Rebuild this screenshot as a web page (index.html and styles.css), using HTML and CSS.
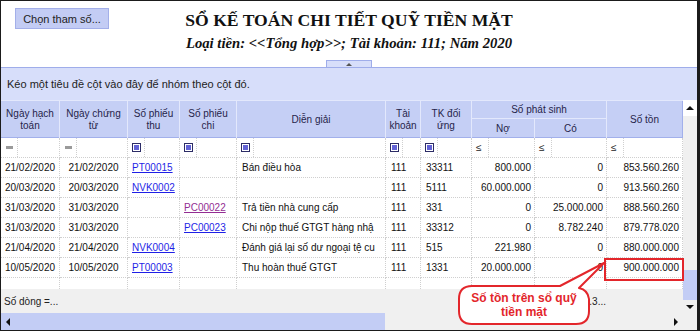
FILE: index.html
```html
<!DOCTYPE html>
<html lang="vi">
<head>
    <meta charset="UTF-8">
    <meta name="viewport" content="width=device-width, initial-scale=1.0">
    <title>Sổ kế toán chi tiết quỹ tiền mặt</title>
    <link rel="stylesheet" href="styles.css">
</head>
<body>
<div class="window">
    <div class="top">
        <div class="head">
            <div class="head-left">
                <button class="param-btn">Chọn tham số...</button>
            </div>
            <div class="titles">
                <h1>SỔ KẾ TOÁN CHI TIẾT QUỸ TIỀN MẶT</h1>
                <p>Loại tiền: &lt;&lt;Tổng hợp&gt;&gt;; Tài khoản: 111; Năm 2020</p>
            </div>
            <div></div>
        </div>
        <div class="collapse-tab"><span class="tri-up tiny"></span></div>
    </div>

    <div class="group-panel">Kéo một tiêu đề cột vào đây để nhóm theo cột đó.</div>

    <div class="grid-area">
        <div class="grid">
            <div class="grid-head">
                <div class="hc r2">Ngày hạch<br>toán</div>
                <div class="hc r2">Ngày chứng<br>từ</div>
                <div class="hc r2">Số phiếu<br>thu</div>
                <div class="hc r2">Số phiếu<br>chi</div>
                <div class="hc r2">Diễn giải</div>
                <div class="hc r2">Tài<br>khoản</div>
                <div class="hc r2">TK đối<br>ứng</div>
                <div class="hc span2">Số phát sinh</div>
                <div class="hc r2">Số tồn</div>
                <div class="hc">Nợ</div>
                <div class="hc">Có</div>
            </div>

            <div class="row filter">
                <div class="cell"><span class="op"><i class="eq"></i></span></div>
                <div class="cell"><span class="op"><i class="eq"></i></span></div>
                <div class="cell"><span class="op"><i class="chk"></i></span></div>
                <div class="cell"><span class="op"><i class="chk"></i></span></div>
                <div class="cell"><span class="op"><i class="chk"></i></span></div>
                <div class="cell"><span class="op"><i class="chk"></i></span></div>
                <div class="cell"><span class="op"><i class="chk"></i></span></div>
                <div class="cell"><span class="op le">≤</span></div>
                <div class="cell"><span class="op le">≤</span></div>
                <div class="cell"><span class="op le">≤</span></div>
            </div>

            <div class="row">
                <div class="cell c">21/02/2020</div>
                <div class="cell c">21/02/2020</div>
                <div class="cell"><a href="#">PT00015</a></div>
                <div class="cell"></div>
                <div class="cell t">Bán điều hòa</div>
                <div class="cell t">111</div>
                <div class="cell t">33311</div>
                <div class="cell n">800.000</div>
                <div class="cell n">0</div>
                <div class="cell n">853.560.260</div>
            </div>
            <div class="row">
                <div class="cell c">20/03/2020</div>
                <div class="cell c">20/03/2020</div>
                <div class="cell"><a href="#">NVK0002</a></div>
                <div class="cell"></div>
                <div class="cell t"></div>
                <div class="cell t">111</div>
                <div class="cell t">5111</div>
                <div class="cell n">60.000.000</div>
                <div class="cell n">0</div>
                <div class="cell n">913.560.260</div>
            </div>
            <div class="row">
                <div class="cell c">31/03/2020</div>
                <div class="cell c">31/03/2020</div>
                <div class="cell"></div>
                <div class="cell"><a href="#" class="visited">PC00022</a></div>
                <div class="cell t">Trả tiền nhà cung cấp</div>
                <div class="cell t">111</div>
                <div class="cell t">331</div>
                <div class="cell n">0</div>
                <div class="cell n">25.000.000</div>
                <div class="cell n">888.560.260</div>
            </div>
            <div class="row">
                <div class="cell c">31/03/2020</div>
                <div class="cell c">31/03/2020</div>
                <div class="cell"></div>
                <div class="cell"><a href="#">PC00023</a></div>
                <div class="cell t">Chi nộp thuế GTGT hàng nhậ</div>
                <div class="cell t">111</div>
                <div class="cell t">33312</div>
                <div class="cell n">0</div>
                <div class="cell n">8.782.240</div>
                <div class="cell n">879.778.020</div>
            </div>
            <div class="row">
                <div class="cell c">21/04/2020</div>
                <div class="cell c">21/04/2020</div>
                <div class="cell"><a href="#">NVK0004</a></div>
                <div class="cell"></div>
                <div class="cell t">Đánh giá lại số dư ngoại tệ cu</div>
                <div class="cell t">111</div>
                <div class="cell t">515</div>
                <div class="cell n">221.980</div>
                <div class="cell n">0</div>
                <div class="cell n">880.000.000</div>
            </div>
            <div class="row">
                <div class="cell c">10/05/2020</div>
                <div class="cell c">10/05/2020</div>
                <div class="cell"><a href="#">PT00003</a></div>
                <div class="cell"></div>
                <div class="cell t">Thu hoàn thuế GTGT</div>
                <div class="cell t">111</div>
                <div class="cell t">1331</div>
                <div class="cell n">20.000.000</div>
                <div class="cell n">0</div>
                <div class="cell n">900.000.000</div>
            </div>
            <div class="row filler">
                <div class="cell"></div><div class="cell"></div><div class="cell"></div><div class="cell"></div><div class="cell"></div>
                <div class="cell"></div><div class="cell"></div><div class="cell"></div><div class="cell"></div><div class="cell"></div>
            </div>

            <div class="summary">
                <div class="sum-count">Số dòng =...</div>
                <div class="sum-co">9.3...</div>
            </div>
        </div>

        <div class="vscroll">
            <div class="sb-btn top-btn"><span class="tri-up"></span></div>
            <div class="sb-track"></div>
            <div class="sb-thumb"></div>
            <div class="sb-btn bottom-btn"><span class="tri-down"></span></div>
        </div>
    </div>

    <div class="hscroll">
        <div class="hs-left"><span class="tri-left"></span></div>
        <div class="hs-thumb"></div>
        <div class="hs-track"></div>
        <div class="hs-right"><span class="tri-right"></span></div>
        <div class="hs-corner"></div>
    </div>

    <!-- chú thích -->
    <div class="mark"></div>
    <div class="callout">
        <svg width="155" height="72" viewBox="0 0 155 72">
            <path d="M17 28 H105 L149 5 L124 30 Q133 32 134 41 V53 Q134 66 121 66 H17 Q4 66 4 53 V41 Q4 28 17 28 Z"
                  fill="#fff" stroke="#e3262b" stroke-width="2" stroke-linejoin="round"/>
        </svg>
        <div class="callout-text">Số tồn trên sổ quỹ<br>tiền mặt</div>
    </div>
</div>
</body>
</html>
```

FILE: styles.css
```css
* {
    box-sizing: border-box;
}
body {
    margin: 0;
    font-family: "Liberation Sans", Arial, sans-serif;
    background-color: #fff;
}
.window {
    position: relative;
    width: 700px;
    height: 331px;
    border: 1px solid #1b1b1b;
    border-right-width: 3px;
    display: flex;
    flex-direction: column;
    overflow: hidden;
    background-color: #fff;
}

/* phần đầu báo cáo */
.top {
    height: 66px;
    display: flex;
    flex-direction: column;
}
.head {
    height: 59px;
    display: grid;
    grid-template-columns: 1fr auto 1fr;
}
.head-left {
    padding: 7px 0 0 14px;
}
.param-btn {
    width: 94px;
    height: 21px;
    padding: 0;
    background-color: #c3ccf4;
    border: 1px solid #a3afe9;
    border-radius: 0;
    font-family: "Liberation Sans", Arial, sans-serif;
    font-size: 11px;
    color: #222;
}
.titles {
    text-align: center;
    font-family: "Liberation Serif", "Times New Roman", serif;
    font-weight: bold;
    color: #111;
}
.titles h1 {
    margin: 9px 0 0;
    font-size: 17.6px;
    line-height: 20px;
}
.titles p {
    margin: 4px 0 0;
    font-size: 14.7px;
    font-style: italic;
    line-height: 18px;
}
.collapse-tab {
    width: 46px;
    height: 7px;
    margin: 0 auto;
    background-color: #d7defa;
    border: 1px solid #9fadea;
    border-bottom: none;
    display: flex;
    justify-content: center;
    align-items: center;
}

.group-panel {
    height: 33px;
    padding-left: 6px;
    border-top: 1px solid #9fadea;
    background-color: #d7defa;
    display: flex;
    align-items: center;
    font-size: 11px;
    color: #222;
}

/* lưới dữ liệu */
.grid-area {
    height: 213px;
    display: flex;
}
.grid {
    width: 682px;
    display: flex;
    flex-direction: column;
}
.grid-head,
.row,
.summary {
    display: grid;
    grid-template-columns: 59px 68px 52px 57px 149px 35px 51px 63px 72px 76px;
}
.grid-head {
    height: 38px;
    grid-template-rows: 18px 20px;
    background-color: #c5cff5;
    border-top: 1px solid #e3e8fc;
    border-bottom: 1px solid #a2b0eb;
}
.hc {
    display: flex;
    align-items: center;
    justify-content: center;
    text-align: center;
    font-size: 10px;
    line-height: 12px;
    color: #25244a;
    border-right: 1px solid #e3e8fc;
}
.hc.r2 {
    grid-row: span 2;
}
.hc.span2 {
    grid-column: span 2;
    border-bottom: 1px solid #e3e8fc;
}
.hc:nth-child(9) {
    border-right-color: #a2b0eb;
}

.row {
    height: 20px;
}
.cell {
    border-right: 1px dotted #cfcfcf;
    border-bottom: 1px dotted #cfcfcf;
    font-size: 10px;
    line-height: 19px;
    color: #111;
    white-space: nowrap;
    overflow: hidden;
    padding: 0 4px;
}
.cell.c {
    text-align: center;
    padding: 0;
}
.cell.t {
    padding-left: 5px;
    padding-right: 0;
}
.cell.n {
    text-align: right;
    padding-right: 3px;
}
.cell a {
    color: #1f1fe6;
    text-decoration: underline;
}
.cell a.visited {
    color: #932d93;
}
.row.filler {
    height: 11px;
}
.row.filler .cell {
    border-bottom: none;
}

/* hàng lọc */
.filter .cell {
    padding: 0;
    display: flex;
}
.op {
    width: 17px;
    height: 19px;
    border-right: 1px dotted #cfcfcf;
    display: flex;
    align-items: center;
    justify-content: center;
}
.op.le {
    font-size: 10px;
    color: #222;
    justify-content: flex-start;
    padding-left: 4px;
}
.eq {
    display: block;
    width: 7px;
    height: 3px;
    background-color: #9a9a9a;
}
.chk {
    display: block;
    width: 9px;
    height: 9px;
    border: 1px solid #2c2c66;
    padding: 1px;
    background-color: #fff;
}
.chk::after {
    content: "";
    display: block;
    width: 5px;
    height: 5px;
    background-color: #6363d6;
}

.summary {
    height: 24px;
    background-color: #f0f0f0;
    font-size: 10px;
    color: #222;
    align-items: center;
}
.sum-count {
    grid-column: 1 / 6;
    padding-left: 3px;
}
.sum-co {
    grid-column: 9 / 10;
    text-align: right;
    padding-right: 1px;
    white-space: nowrap;
}

/* thanh cuộn */
.vscroll {
    width: 14px;
    display: flex;
    flex-direction: column;
    background-color: #f0f0f0;
}
.sb-btn {
    display: flex;
    align-items: center;
    justify-content: center;
}
.top-btn {
    height: 16px;
    background-color: #fff;
}
.bottom-btn {
    height: 13px;
}
.sb-track {
    flex: 1;
}
.sb-thumb {
    height: 30px;
    background-color: #c3cdf5;
}
.hscroll {
    height: 17px;
    display: flex;
    background-color: #f0f0f0;
}
.hs-left {
    width: 14px;
    background-color: #c3cdf5;
    display: flex;
    align-items: center;
    justify-content: center;
}
.hs-thumb {
    width: 370px;
    background-color: #c3cdf5;
}
.hs-track {
    flex: 1;
}
.hs-right {
    width: 15px;
    display: flex;
    align-items: center;
    justify-content: center;
}
.hs-corner {
    width: 14px;
}

.tri-up,
.tri-down,
.tri-left,
.tri-right {
    display: block;
    width: 0;
    height: 0;
    border: 4px solid transparent;
}
.tri-up {
    border-bottom-color: #111;
    border-top-width: 0;
}
.tri-up.tiny {
    border-width: 0 3px 3px;
    border-bottom-color: #555;
}
.tri-down {
    border-top-color: #111;
    border-bottom-width: 0;
}
.tri-left {
    border-right-color: #111;
    border-left-width: 0;
}
.tri-right {
    border-left-color: #111;
    border-right-width: 0;
}

/* chú thích màu đỏ */
.mark {
    position: absolute;
    left: 603px;
    top: 257px;
    width: 80px;
    height: 23px;
    border: 2px solid #e3262b;
}
.callout {
    position: absolute;
    left: 454px;
    top: 257px;
    width: 155px;
    height: 72px;
}
.callout svg {
    display: block;
}
.callout-text {
    position: absolute;
    left: 5px;
    top: 29px;
    width: 128px;
    height: 36px;
    display: flex;
    align-items: center;
    justify-content: center;
    text-align: center;
    font-size: 12px;
    font-weight: bold;
    line-height: 14px;
    color: #e3262b;
}
```
